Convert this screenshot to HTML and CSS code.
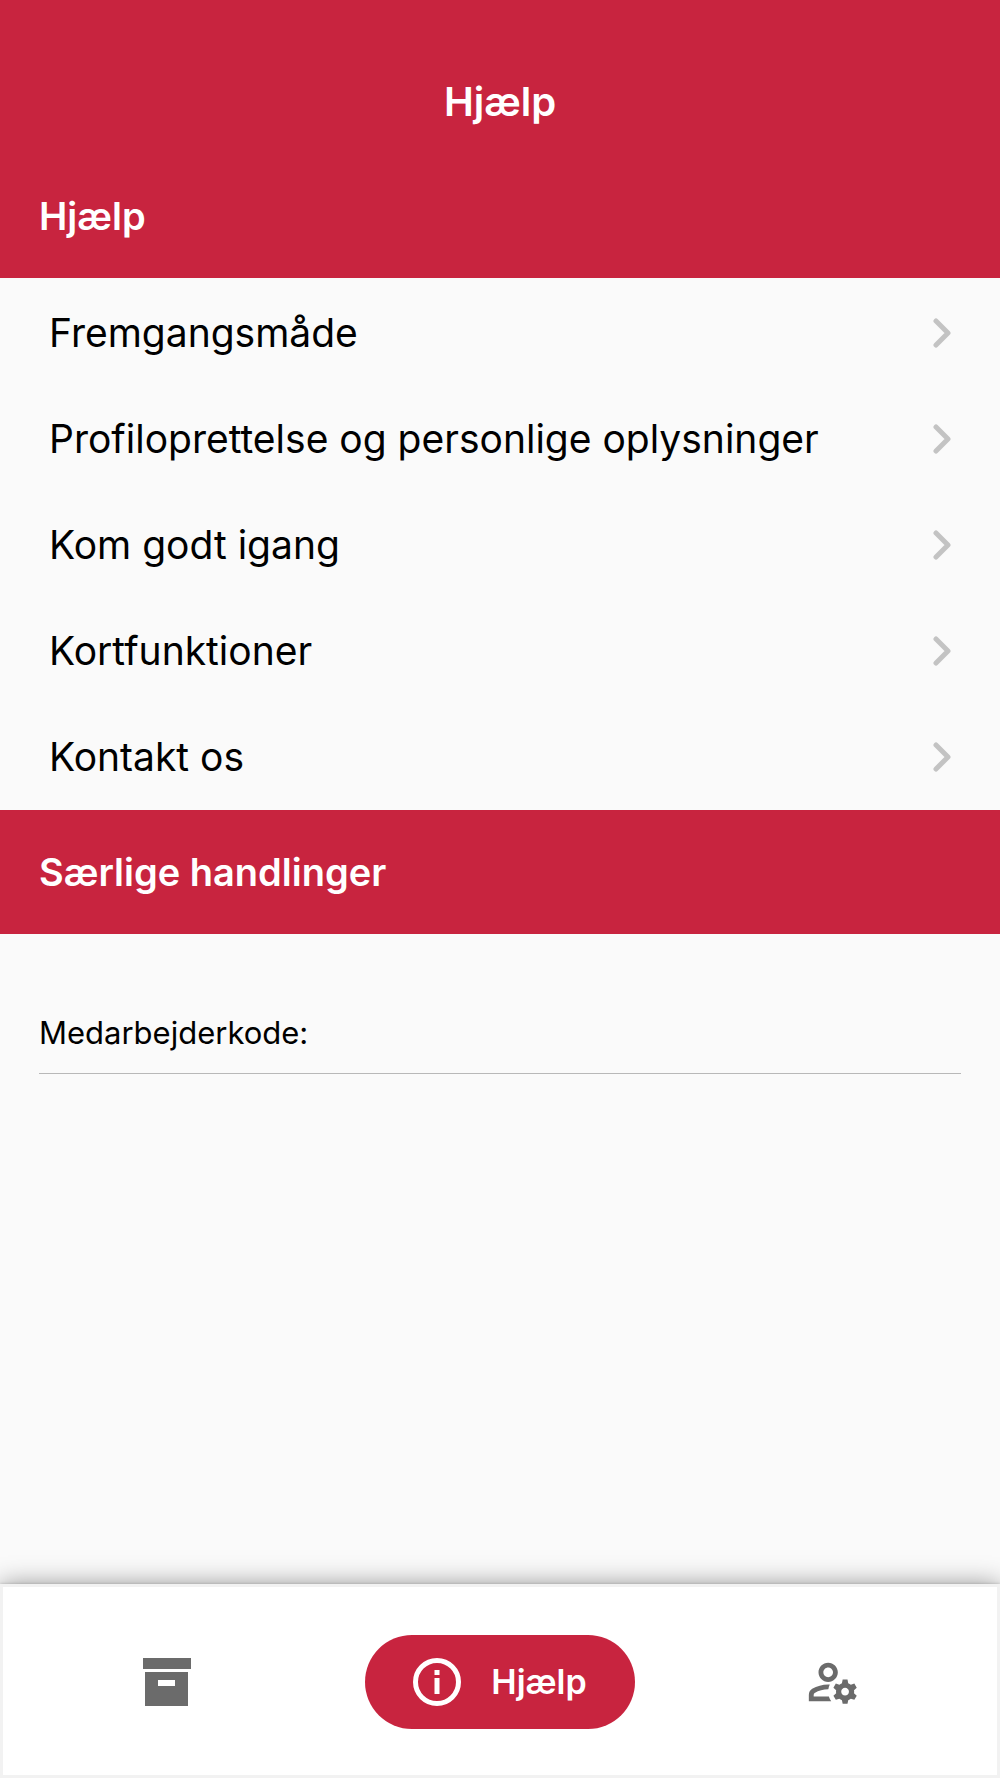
FILE: index.html
```html
<!DOCTYPE html>
<html lang="da">
<head>
    <meta charset="UTF-8">
    <meta name="viewport" content="width=device-width, initial-scale=1.0">
    <title>Hjælp</title>
    <link rel="stylesheet" href="styles.css">
</head>
<body>
    <header class="topbar">
        <h1>Hjælp</h1>
    </header>

    <main class="content">
        <h2 class="section-title">Hjælp</h2>
        <ul class="help-list">
            <li>
                <a href="#fremgangsmaade">Fremgangsmåde
                    <svg class="chevron" viewBox="0 0 18 30"><path d="M3 3l12 12L3 27"/></svg>
                </a>
            </li>
            <li>
                <a href="#profil">Profiloprettelse og personlige oplysninger
                    <svg class="chevron" viewBox="0 0 18 30"><path d="M3 3l12 12L3 27"/></svg>
                </a>
            </li>
            <li>
                <a href="#igang">Kom godt igang
                    <svg class="chevron" viewBox="0 0 18 30"><path d="M3 3l12 12L3 27"/></svg>
                </a>
            </li>
            <li>
                <a href="#kort">Kortfunktioner
                    <svg class="chevron" viewBox="0 0 18 30"><path d="M3 3l12 12L3 27"/></svg>
                </a>
            </li>
            <li>
                <a href="#kontakt">Kontakt os
                    <svg class="chevron" viewBox="0 0 18 30"><path d="M3 3l12 12L3 27"/></svg>
                </a>
            </li>
        </ul>

        <h2 class="section-title">Særlige handlinger</h2>
        <div class="code-field">
            <label for="code">Medarbejderkode:</label>
            <input type="text" id="code">
        </div>
    </main>

    <nav class="tabbar">
        <a class="tab" href="#arkiv" aria-label="Arkiv">
            <svg width="48" height="48" viewBox="0 0 48 48">
                <path d="M0 0h48v11H0z"/>
                <path fill-rule="evenodd" d="M2 14h43v34H2zM15 22v6h17v-6z"/>
            </svg>
        </a>
        <a class="tab active" href="#hjaelp">
            <svg width="48" height="48" viewBox="0 0 48 48">
                <circle cx="24" cy="24" r="21.5" fill="none" stroke="currentColor" stroke-width="5"/>
                <path d="M21.5 12h5v5h-5zM21.5 20h5v16h-5z"/>
            </svg>
            <span>Hjælp</span>
        </a>
        <a class="tab" href="#profil-indstillinger" aria-label="Profil">
            <svg width="58" height="58" viewBox="0 0 24 24">
                <path d="M4 18v-.65c0-.34.16-.66.41-.81C6.1 15.53 8.03 15 10 15c.03 0 .05 0 .08.01.1-.7.3-1.37.59-1.98-.22-.02-.44-.03-.67-.03-2.42 0-4.68.67-6.61 1.82-.88.52-1.39 1.5-1.39 2.53V20h9.26c-.42-.6-.75-1.28-.97-2H4z"/>
                <path d="M10 12c2.21 0 4-1.79 4-4s-1.79-4-4-4-4 1.79-4 4 1.79 4 4 4zm0-6c1.1 0 2 .9 2 2s-.9 2-2 2-2-.9-2-2 .9-2 2-2z"/>
                <path d="M20.75 16c0-.22-.03-.42-.06-.63l1.14-1.01-1-1.73-1.45.49c-.32-.27-.68-.48-1.08-.63L18 11h-2l-.3 1.49c-.4.15-.76.36-1.08.63l-1.45-.49-1 1.73 1.14 1.01c-.03.21-.06.41-.06.63s.03.42.06.63l-1.14 1.01 1 1.73 1.45-.49c.32.27.68.48 1.08.63L16 21h2l.3-1.49c.4-.15.76-.36 1.08-.63l1.45.49 1-1.73-1.14-1.01c.03-.21.06-.41.06-.63zM17 17.6c-.88 0-1.6-.72-1.6-1.6s.72-1.6 1.6-1.6 1.6.72 1.6 1.6-.72 1.6-1.6 1.6z"/>
            </svg>
        </a>
    </nav>
</body>
</html>
```
FILE: styles.css
```css
* {
    box-sizing: border-box;
}
body {
    display: flex;
    flex-direction: column;
    min-height: 100vh;
    margin: 0;
    font-family: Inter, "Liberation Sans", sans-serif;
    background-color: #fafafa;
    color: #000;
}
a {
    color: inherit;
    text-decoration: none;
}
.topbar {
    padding: 50px 39px 0;
    background-color: #c8243f;
    color: white;
    text-align: center;
}
.topbar h1 {
    margin: 0;
    font-size: 40px;
    font-weight: 600;
    line-height: 104px;
}
.content {
    flex: 1;
}
.section-title {
    margin: 0;
    padding: 0 39px;
    background-color: #c8243f;
    color: white;
    font-size: 38px;
    font-weight: 600;
    line-height: 124px;
}
.help-list {
    margin: 0;
    padding: 2px 0 0;
    list-style: none;
}
.help-list a {
    display: flex;
    align-items: center;
    justify-content: space-between;
    padding: 0 49px;
    font-size: 39px;
    line-height: 106px;
}
.chevron {
    width: 18px;
    height: 30px;
    fill: none;
    stroke: #c3c3c3;
    stroke-width: 5;
    stroke-linecap: round;
    stroke-linejoin: round;
}
.code-field {
    display: flex;
    align-items: center;
    gap: 16px;
    margin: 59px 39px 0;
    border-bottom: 1px solid #b8b8b8;
    font-size: 31px;
    line-height: 78px;
}
.code-field input {
    flex: 1;
    min-width: 0;
    border: none;
    outline: none;
    background: transparent;
    font: inherit;
}
.tabbar {
    display: grid;
    grid-template-columns: repeat(3, 1fr);
    align-items: center;
    justify-items: center;
    padding: 51px 0 49px;
    background-color: white;
    box-shadow: inset 0 0 0 3px #f2f2f2, 0 0 3px rgba(0, 0, 0, 0.2), 0 0 24px rgba(0, 0, 0, 0.4);
}
.tab {
    color: #6b6b6b;
}
.tab svg {
    display: block;
    fill: currentColor;
}
.tab.active {
    display: flex;
    align-items: center;
    gap: 30px;
    padding: 0 48px;
    border-radius: 47px;
    background-color: #c8243f;
    color: white;
    font-size: 34px;
    font-weight: 600;
    line-height: 94px;
}
```
